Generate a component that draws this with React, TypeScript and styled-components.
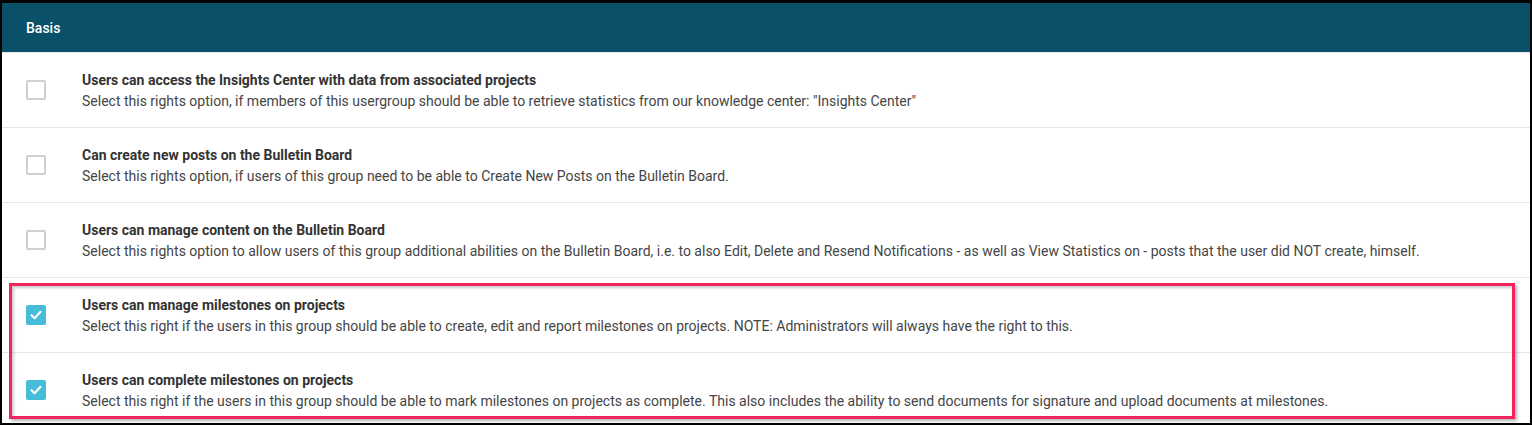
import styled, { createGlobalStyle } from "styled-components";

const GlobalStyle = createGlobalStyle`
  html, body {
    margin: 0;
    padding: 0;
    background: #000;
  }
  * {
    box-sizing: border-box;
  }
`;

const Frame = styled.div`
  position: relative;
  width: 1532px;
  height: 425px;
  overflow: hidden;
  background: #fff;
  border-style: solid;
  border-color: #000;
  border-width: 3px 2px 2px 2px;
  font-family: Roboto, "Liberation Sans", Arial, sans-serif;
`;

const Header = styled.div`
  height: 50px;
  display: flex;
  align-items: center;
  padding-left: 24px;
  background: #0a5068;
  border-bottom: 1px solid #e6e6e6;
  color: #fff;
  font-size: 14px;
  font-weight: 500;
`;

const Row = styled.div`
  height: 75px;
  display: flex;
  align-items: center;
  padding-left: 24px;
  gap: 36px;
  border-bottom: 1px solid #e6e6e6;
`;

const Box = styled.div<{ $checked?: boolean }>`
  flex: none;
  width: 20px;
  height: 20px;
  border-radius: 2px;
  display: flex;
  align-items: center;
  justify-content: center;
  background: ${(p) => (p.$checked ? "#45bcd8" : "#fff")};
  border: 2px solid ${(p) => (p.$checked ? "#45bcd8" : "#cfcfcf")};
`;

const TextBlock = styled.div`
  display: flex;
  flex-direction: column;
  gap: 3px;
  padding-top: 1px;
`;

const Title = styled.div`
  font-size: 14px;
  font-weight: 700;
  color: #333;
  line-height: 18px;
`;

const Desc = styled.div`
  font-size: 14px;
  color: #454545;
  line-height: 18px;
`;

const Highlight = styled.div`
  position: absolute;
  left: 7px;
  top: 280px;
  width: 1506px;
  height: 136px;
  border: 3px solid #f2245c;
  box-shadow: 2px 2px 3px rgba(0, 0, 0, 0.3), inset 2px 2px 3px rgba(0, 0, 0, 0.2);
  pointer-events: none;
`;

const rights = [
  {
    title: "Users can access the Insights Center with data from associated projects",
    desc: 'Select this rights option, if members of this usergroup should be able to retrieve statistics from our knowledge center: "Insights Center"',
    checked: false,
  },
  {
    title: "Can create new posts on the Bulletin Board",
    desc: "Select this rights option, if users of this group need to be able to Create New Posts on the Bulletin Board.",
    checked: false,
  },
  {
    title: "Users can manage content on the Bulletin Board",
    desc: "Select this rights option to allow users of this group additional abilities on the Bulletin Board, i.e. to also Edit, Delete and Resend Notifications - as well as View Statistics on - posts that the user did NOT create, himself.",
    checked: false,
  },
  {
    title: "Users can manage milestones on projects",
    desc: "Select this right if the users in this group should be able to create, edit and report milestones on projects. NOTE: Administrators will always have the right to this.",
    checked: true,
  },
  {
    title: "Users can complete milestones on projects",
    desc: "Select this right if the users in this group should be able to mark milestones on projects as complete. This also includes the ability to send documents for signature and upload documents at milestones.",
    checked: true,
  },
];

function Check() {
  return (
    <svg width="14" height="14" viewBox="0 0 14 14">
      <path d="M2.5 7.2 L5.6 10.2 L11.5 3.8" fill="none" stroke="#fff" strokeWidth="2.2" strokeLinecap="round" strokeLinejoin="round" />
    </svg>
  );
}

export default function App() {
  return (
    <>
      <GlobalStyle />
      <Frame>
        <Header>Basis</Header>
        {rights.map((r) => (
          <Row key={r.title}>
            <Box $checked={r.checked}>{r.checked && <Check />}</Box>
            <TextBlock>
              <Title>{r.title}</Title>
              <Desc>{r.desc}</Desc>
            </TextBlock>
          </Row>
        ))}
        <Highlight />
      </Frame>
    </>
  );
}
